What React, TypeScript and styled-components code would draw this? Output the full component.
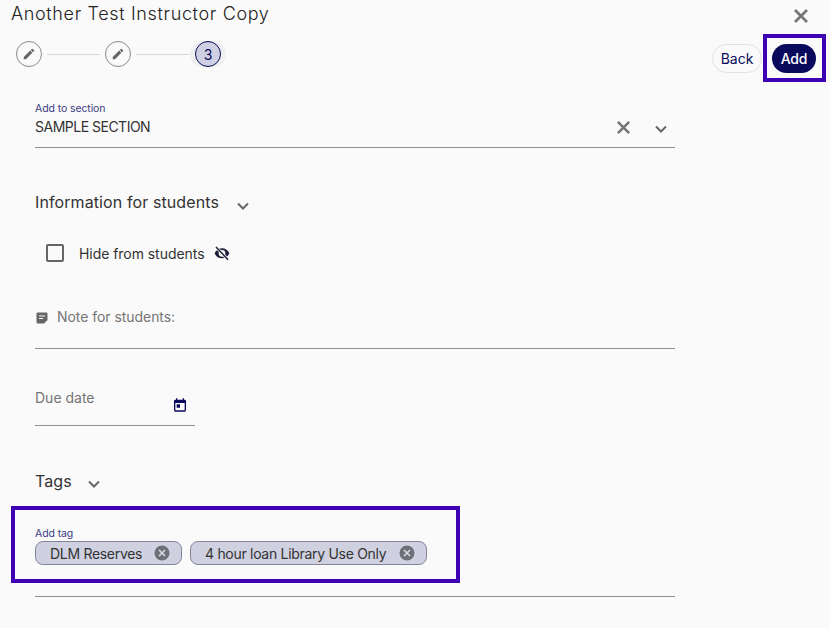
import React from 'react';
import styled, { createGlobalStyle } from 'styled-components';

const GlobalStyle = createGlobalStyle`
    html, body {
        margin: 0;
        padding: 0;
        background: #fafafa;
        font-family: "Inter", "Roboto", "Liberation Sans", sans-serif;
        color: #333333;
    }
`;

const Page = styled.div`
    width: 830px;
    height: 628px;
    overflow: hidden;
    background: #fafafa;
    box-sizing: border-box;
`;
const Header = styled.div`
    display: flex;
    justify-content: space-between;
    height: 82px;
`;
const HeaderLeft = styled.div`
    display: flex;
    flex-direction: column;
    padding-left: 11px;
`;
const Title = styled.div`
    font-size: 18px;
    font-weight: 300;
    line-height: 28px;
    color: #222222;
    letter-spacing: 0.65px;
`;
const Stepper = styled.div`
    display: flex;
    align-items: center;
    margin-top: 13px;
    padding-left: 5px;
`;
const StepCircle = styled.div<{ $active?: boolean }>`
    width: 26px;
    height: 26px;
    box-sizing: border-box;
    border-radius: 50%;
    display: flex;
    align-items: center;
    justify-content: center;
    font-size: 14px;
    color: #0a0a5c;
    margin-left: ${p => (p.$active ? '1px' : '0')};
    background: ${p => (p.$active ? '#cfd0e3' : '#fafafa')};
    border: 1px solid ${p => (p.$active ? '#0a0a5c' : '#8a8a8a')};
    box-shadow: ${p => (p.$active ? '5px 0 0 #f0f0f0, -5px 0 0 #f0f0f0' : 'none')};
`;
const StepLine = styled.div`
    width: 53px;
    height: 1px;
    margin: 0 5px;
    background: #d6d6d6;
`;
const HeaderRight = styled.div`
    display: flex;
    flex-direction: column;
    align-items: flex-end;
    padding-right: 4px;
`;
const CloseButton = styled.div`
    display: flex;
    height: 34px;
    padding: 8px 17px 0 0;
    box-sizing: border-box;
    color: #757575;
`;
const Actions = styled.div`
    display: flex;
    align-items: center;
`;
const BackButton = styled.div`
    width: 50px;
    height: 29px;
    box-sizing: border-box;
    border: 1px solid #e2e2e2;
    border-radius: 15px;
    display: flex;
    align-items: center;
    justify-content: center;
    font-size: 14px;
    color: #0a0a5c;
    margin-right: 1px;
`;
const Highlight = styled.div`
    border: 4px solid #3d00b3;
`;
const AddBox = styled(Highlight)`
    width: 63px;
    height: 48px;
    box-sizing: border-box;
    padding-right: 1px;
    display: flex;
    align-items: center;
    justify-content: center;
`;
const AddButton = styled.div`
    width: 44px;
    height: 29px;
    border-radius: 15px;
    background: #0a0a5c;
    color: #ffffff;
    font-size: 14px;
    font-weight: 500;
    letter-spacing: -0.2px;
    display: flex;
    align-items: center;
    justify-content: center;
`;
const Form = styled.div`
    width: 640px;
    margin-left: 35px;
    display: flex;
    flex-direction: column;
`;
const FieldLabel = styled.div`
    font-size: 10.500px;
    line-height: 14px;
    letter-spacing: -0.1px;
    color: #3a3a85;
`;
const SectionField = styled.div`
    margin-top: 20px;
    height: 46px;
    box-sizing: border-box;
    border-bottom: 1px solid #8f8f8f;
`;
const SectionRow = styled.div`
    display: flex;
    align-items: center;
    height: 24px;
    margin-top: -1px;
    font-size: 14px;
    color: #333333;
`;
const SectionValue = styled.div`
    flex: 1;
    letter-spacing: -0.5px;
    margin-top: -1px;
`;
const SectionIcons = styled.div`
    display: flex;
    align-items: center;
    gap: 24px;
    padding-right: 8px;
    color: #757575;
`;
const GroupHeading = styled.div<{ $top: number }>`
    display: flex;
    align-items: center;
    margin-top: ${p => p.$top}px;
    height: 24px;
    font-size: 16px;
    letter-spacing: 0.1px;
    color: #333333;
`;
const Chevron = styled.svg<{ $gap?: number; $drop?: number }>`
    margin-left: ${p => p.$gap ?? 0}px;
    margin-top: ${p => p.$drop ?? 4}px;
    color: #666666;
`;
const CheckRow = styled.div`
    display: flex;
    align-items: center;
    margin: 29px 0 0 11px;
    height: 20px;
    font-size: 14px;
    letter-spacing: -0.05px;
    color: #333333;
`;
const CheckBox = styled.div`
    width: 18px;
    height: 18px;
    box-sizing: border-box;
    border: 2px solid #666666;
    border-radius: 2px;
    margin-right: 15px;
`;
const EyeIcon = styled.svg`
    margin-left: 10px;
    color: #1f1f3a;
`;
const NoteField = styled.div`
    margin-top: 43px;
    height: 43px;
    padding-top: 1px;
    box-sizing: border-box;
    border-bottom: 1px solid #8f8f8f;
    display: flex;
    align-items: flex-start;
    font-size: 14px;
    line-height: 20px;
    letter-spacing: -0.05px;
    color: #757575;
`;
const NoteIcon = styled.svg`
    margin: 4px 8px 0 0;
    color: #666666;
`;
const DueField = styled.div`
    margin-top: 39px;
    width: 160px;
    height: 38px;
    box-sizing: border-box;
    border-bottom: 1px solid #8f8f8f;
    display: flex;
    justify-content: space-between;
    font-size: 14px;
    line-height: 20px;
    color: #757575;
`;
const CalendarIcon = styled.svg`
    margin: 9px 7px 0 0;
    color: #0a0a5c;
`;
const TagBox = styled(Highlight)`
    width: 449px;
    height: 77px;
    box-sizing: border-box;
    margin: 13px 0 0 -24px;
    padding: 17px 0 0 20px;
`;
const ChipRow = styled.div`
    display: flex;
    gap: 8px;
`;
const Chip = styled.div<{ $width: number }>`
    width: ${p => p.$width}px;
    height: 24px;
    box-sizing: border-box;
    border: 1px solid #85859a;
    border-radius: 8px;
    background: #cfd0e0;
    display: flex;
    align-items: center;
    justify-content: space-between;
    padding: 0 11px 0 14px;
    font-size: 14px;
    letter-spacing: -0.3px;
    color: #333333;
`;
const BottomRule = styled.div`
    height: 1px;
    margin-top: 13px;
    background: #8f8f8f;
`;

const PencilIcon = () => (
    <svg width="14" height="14" viewBox="0 0 24 24" fill="#666666">
        <path d="M3 17.25V21h3.75L17.81 9.94l-3.75-3.75L3 17.25zM20.71 7.04a1 1 0 0 0 0-1.41l-2.34-2.34a1 1 0 0 0-1.41 0l-1.83 1.83 3.75 3.75 1.83-1.83z" />
    </svg>
);

const CrossIcon = ({ size }: { size: number }) => (
    <svg width={size} height={size} viewBox="0 0 16 16" fill="none" stroke="currentColor" strokeWidth="2.700">
        <path d="M2 2l12 12M14 2L2 14" />
    </svg>
);

const ChevronIcon = ({ gap, drop }: { gap?: number; drop?: number }) => (
    <Chevron $gap={gap} $drop={drop} width="12" height="8" viewBox="0 0 12 8" fill="none" stroke="currentColor" strokeWidth="2">
        <path d="M1 1.500l5 5 5-5" />
    </Chevron>
);

const ChipClose = () => (
    <svg width="16" height="16" viewBox="0 0 16 16">
        <circle cx="8" cy="8" r="7.500" fill="#6f6f78" />
        <path d="M5 5l6 6M11 5l-6 6" stroke="#d8d8e4" strokeWidth="1.700" />
    </svg>
);

const App: React.FC = (): JSX.Element => {
    return (
        <Page>
            <GlobalStyle />
            <Header>
                <HeaderLeft>
                    <Title>Another Test Instructor Copy</Title>
                    <Stepper>
                        <StepCircle><PencilIcon /></StepCircle>
                        <StepLine />
                        <StepCircle><PencilIcon /></StepCircle>
                        <StepLine />
                        <StepCircle $active>3</StepCircle>
                    </Stepper>
                </HeaderLeft>
                <HeaderRight>
                    <CloseButton><CrossIcon size={16} /></CloseButton>
                    <Actions>
                        <BackButton>Back</BackButton>
                        <AddBox><AddButton>Add</AddButton></AddBox>
                    </Actions>
                </HeaderRight>
            </Header>
            <Form>
                <SectionField>
                    <FieldLabel>Add to section</FieldLabel>
                    <SectionRow>
                        <SectionValue>SAMPLE SECTION</SectionValue>
                        <SectionIcons>
                            <CrossIcon size={15} />
                            <ChevronIcon />
                        </SectionIcons>
                    </SectionRow>
                </SectionField>
                <GroupHeading $top={42}>
                    Information for students
                    <ChevronIcon gap={18} drop={7} />
                </GroupHeading>
                <CheckRow>
                    <CheckBox />
                    Hide from students
                    <EyeIcon width="16" height="16" viewBox="0 0 24 24" fill="currentColor">
                        <path d="M12 5C7 5 2.700 8.100 1 12.500 2.700 16.900 7 20 12 20s9.300-3.100 11-7.500C21.300 8.100 17 5 12 5zm0 12.500a5 5 0 1 1 0-10 5 5 0 0 1 0 10z" />
                        <path d="M3 3l18 19" stroke="#fafafa" strokeWidth="4.500" />
                        <path d="M3 3l18 19" stroke="currentColor" strokeWidth="2.200" />
                    </EyeIcon>
                </CheckRow>
                <NoteField>
                    <NoteIcon width="14" height="14" viewBox="0 0 14 14" fill="currentColor">
                        <path d="M2.500 1.500h9a1 1 0 0 1 1 1V9l-3.500 3.500H2.500a1 1 0 0 1-1-1v-9a1 1 0 0 1 1-1z" />
                        <path d="M4 5h6M4 7.500h4" stroke="#fafafa" strokeWidth="1.100" />
                    </NoteIcon>
                    Note for students:
                </NoteField>
                <DueField>
                    Due date
                    <CalendarIcon width="16" height="16" viewBox="0 0 24 24" fill="currentColor">
                        <path d="M19 4h-1V2h-2v2H8V2H6v2H5a2 2 0 0 0-2 2v14a2 2 0 0 0 2 2h14a2 2 0 0 0 2-2V6a2 2 0 0 0-2-2zm0 16H5V9h14v11zM7 11h5v5H7v-5z" />
                    </CalendarIcon>
                </DueField>
                <GroupHeading $top={43}>
                    Tags
                    <ChevronIcon gap={16} drop={6} />
                </GroupHeading>
                <TagBox>
                    <FieldLabel>Add tag</FieldLabel>
                    <ChipRow>
                        <Chip $width={147}>DLM Reserves<ChipClose /></Chip>
                        <Chip $width={237}>4 hour loan Library Use Only<ChipClose /></Chip>
                    </ChipRow>
                </TagBox>
                <BottomRule />
            </Form>
        </Page>
    );
};

export default App;
